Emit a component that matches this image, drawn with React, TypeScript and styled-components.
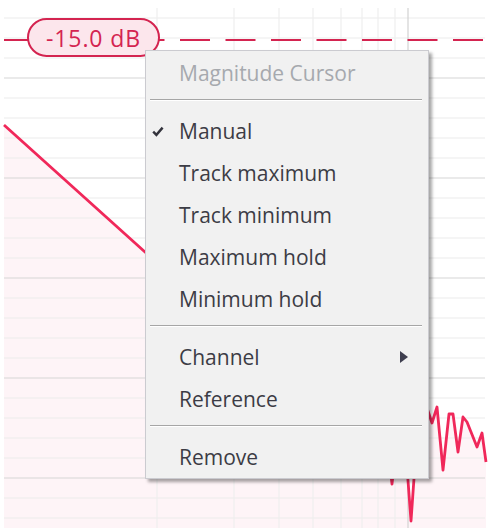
import React from 'react';
import styled, { createGlobalStyle } from 'styled-components';

const GlobalStyle = createGlobalStyle`
  html, body {
    margin: 0;
    padding: 0;
    background: #ffffff;
  }
  body {
    font-family: 'Open Sans', 'Noto Sans', 'Liberation Sans', sans-serif;
  }
`;

const Stage = styled.div`
  position: relative;
  width: 490px;
  height: 528px;
  overflow: hidden;
  background: #ffffff;
`;

const Plot = styled.svg`
  display: block;
`;

const CursorBadge = styled.div`
  position: absolute;
  left: 27px;
  top: 18px;
  width: 133px;
  height: 39px;
  box-sizing: border-box;
  border: 2.5px solid #d42450;
  border-radius: 20px;
  background: #fce6ec;
  color: #d42450;
  font-size: 23px;
  letter-spacing: 0.9px;
  display: flex;
  align-items: center;
  justify-content: center;
  padding-top: 1px;
`;

const Menu = styled.div`
  position: absolute;
  left: 145px;
  top: 50px;
  width: 284px;
  box-sizing: border-box;
  background: #f1f1f1;
  border: 1px solid #cbcbd0;
  box-shadow: 3px 3px 3px rgba(0, 0, 0, 0.35);
  display: flex;
  flex-direction: column;
  font-size: 21px;
  color: #3c3c45;
`;

const MenuHeader = styled.div`
  height: 43px;
  display: flex;
  align-items: center;
  padding-left: 33px;
  color: #a6a9ae;
`;

const Separator = styled.div`
  margin: 5px 6px 9px 4px;
  border-top: 1px solid #a6a6a6;
  border-bottom: 1px solid #ffffff;
`;

const Item = styled.div`
  height: 42px;
  display: flex;
  align-items: center;
`;

const CheckSlot = styled.span`
  width: 33px;
  box-sizing: border-box;
  padding-left: 6px;
  display: flex;
  align-items: center;
`;

const Label = styled.span`
  flex: 1;
`;

const SubArrow = styled.span`
  margin-right: 20px;
  width: 0;
  height: 0;
  border-top: 6.5px solid transparent;
  border-bottom: 6.5px solid transparent;
  border-left: 8px solid #3e3e4e;
`;

type Entry = { label: string; checked?: boolean; submenu?: boolean };

const groups: Entry[][] = [
  [
    { label: 'Manual', checked: true },
    { label: 'Track maximum' },
    { label: 'Track minimum' },
    { label: 'Maximum hold' },
    { label: 'Minimum hold' },
  ],
  [{ label: 'Channel', submenu: true }, { label: 'Reference' }],
  [{ label: 'Remove' }],
];

const hLines = Array.from({ length: 26 }, (_, i) => 18 + i * 20);
const vLines = [157, 234, 279, 313, 341, 362, 378, 395, 408];

const trace = [
  [4, 125], [145, 252], [300, 390], [360, 412], [385, 420], [392, 484],
  [398, 430], [405, 440], [411, 521], [416, 450], [425, 402], [432, 423],
  [437, 407], [443, 470], [449, 414], [453, 414], [458, 452], [463, 417],
  [467, 422], [477, 447], [482, 433], [486, 462],
];

const tracePath = trace.map(([x, y], i) => `${i ? 'L' : 'M'}${x},${y}`).join(' ');

const Chart = () => (
  <Plot width={490} height={528} viewBox="0 0 490 528">
    <path d={`${tracePath} L486,528 L4,528 Z`} fill="#f3285a" fillOpacity={0.05} />
    {hLines.map((y) => (
      <line
        key={y}
        x1={4}
        x2={485}
        y1={y}
        y2={y}
        stroke={(y - 78) % 100 === 0 ? '#d6d6d6' : '#ececec'}
        strokeWidth={1.2}
      />
    ))}
    {vLines.map((x) => (
      <line
        key={x}
        x1={x}
        x2={x}
        y1={8}
        y2={528}
        stroke={x === 408 ? '#d2d2d2' : '#efefef'}
        strokeWidth={1.2}
      />
    ))}
    <line
      x1={4}
      x2={485}
      y1={40}
      y2={40}
      stroke="#d42450"
      strokeWidth={2}
      strokeDasharray="30 15.5"
      strokeDashoffset={6}
    />
    <path d={tracePath} fill="none" stroke="#f0285a" strokeWidth={2.8} strokeLinejoin="round" />
  </Plot>
);

const App = () => {
  return (
    <Stage>
      <GlobalStyle />
      <Chart />
      <CursorBadge>-15.0 dB</CursorBadge>
      <Menu>
        <MenuHeader>Magnitude Cursor</MenuHeader>
        {groups.map((group, gi) => (
          <React.Fragment key={gi}>
            <Separator />
            {group.map((entry) => (
              <Item key={entry.label}>
                <CheckSlot>
                  {entry.checked && (
                    <svg width={12} height={11} viewBox="0 0 12 11">
                      <path d="M1.2 5.6 L4.4 8.9 L10.6 1.6" fill="none" stroke="#33333c" strokeWidth={2.4} />
                    </svg>
                  )}
                </CheckSlot>
                <Label>{entry.label}</Label>
                {entry.submenu && <SubArrow />}
              </Item>
            ))}
          </React.Fragment>
        ))}
      </Menu>
    </Stage>
  );
};

export default App;
